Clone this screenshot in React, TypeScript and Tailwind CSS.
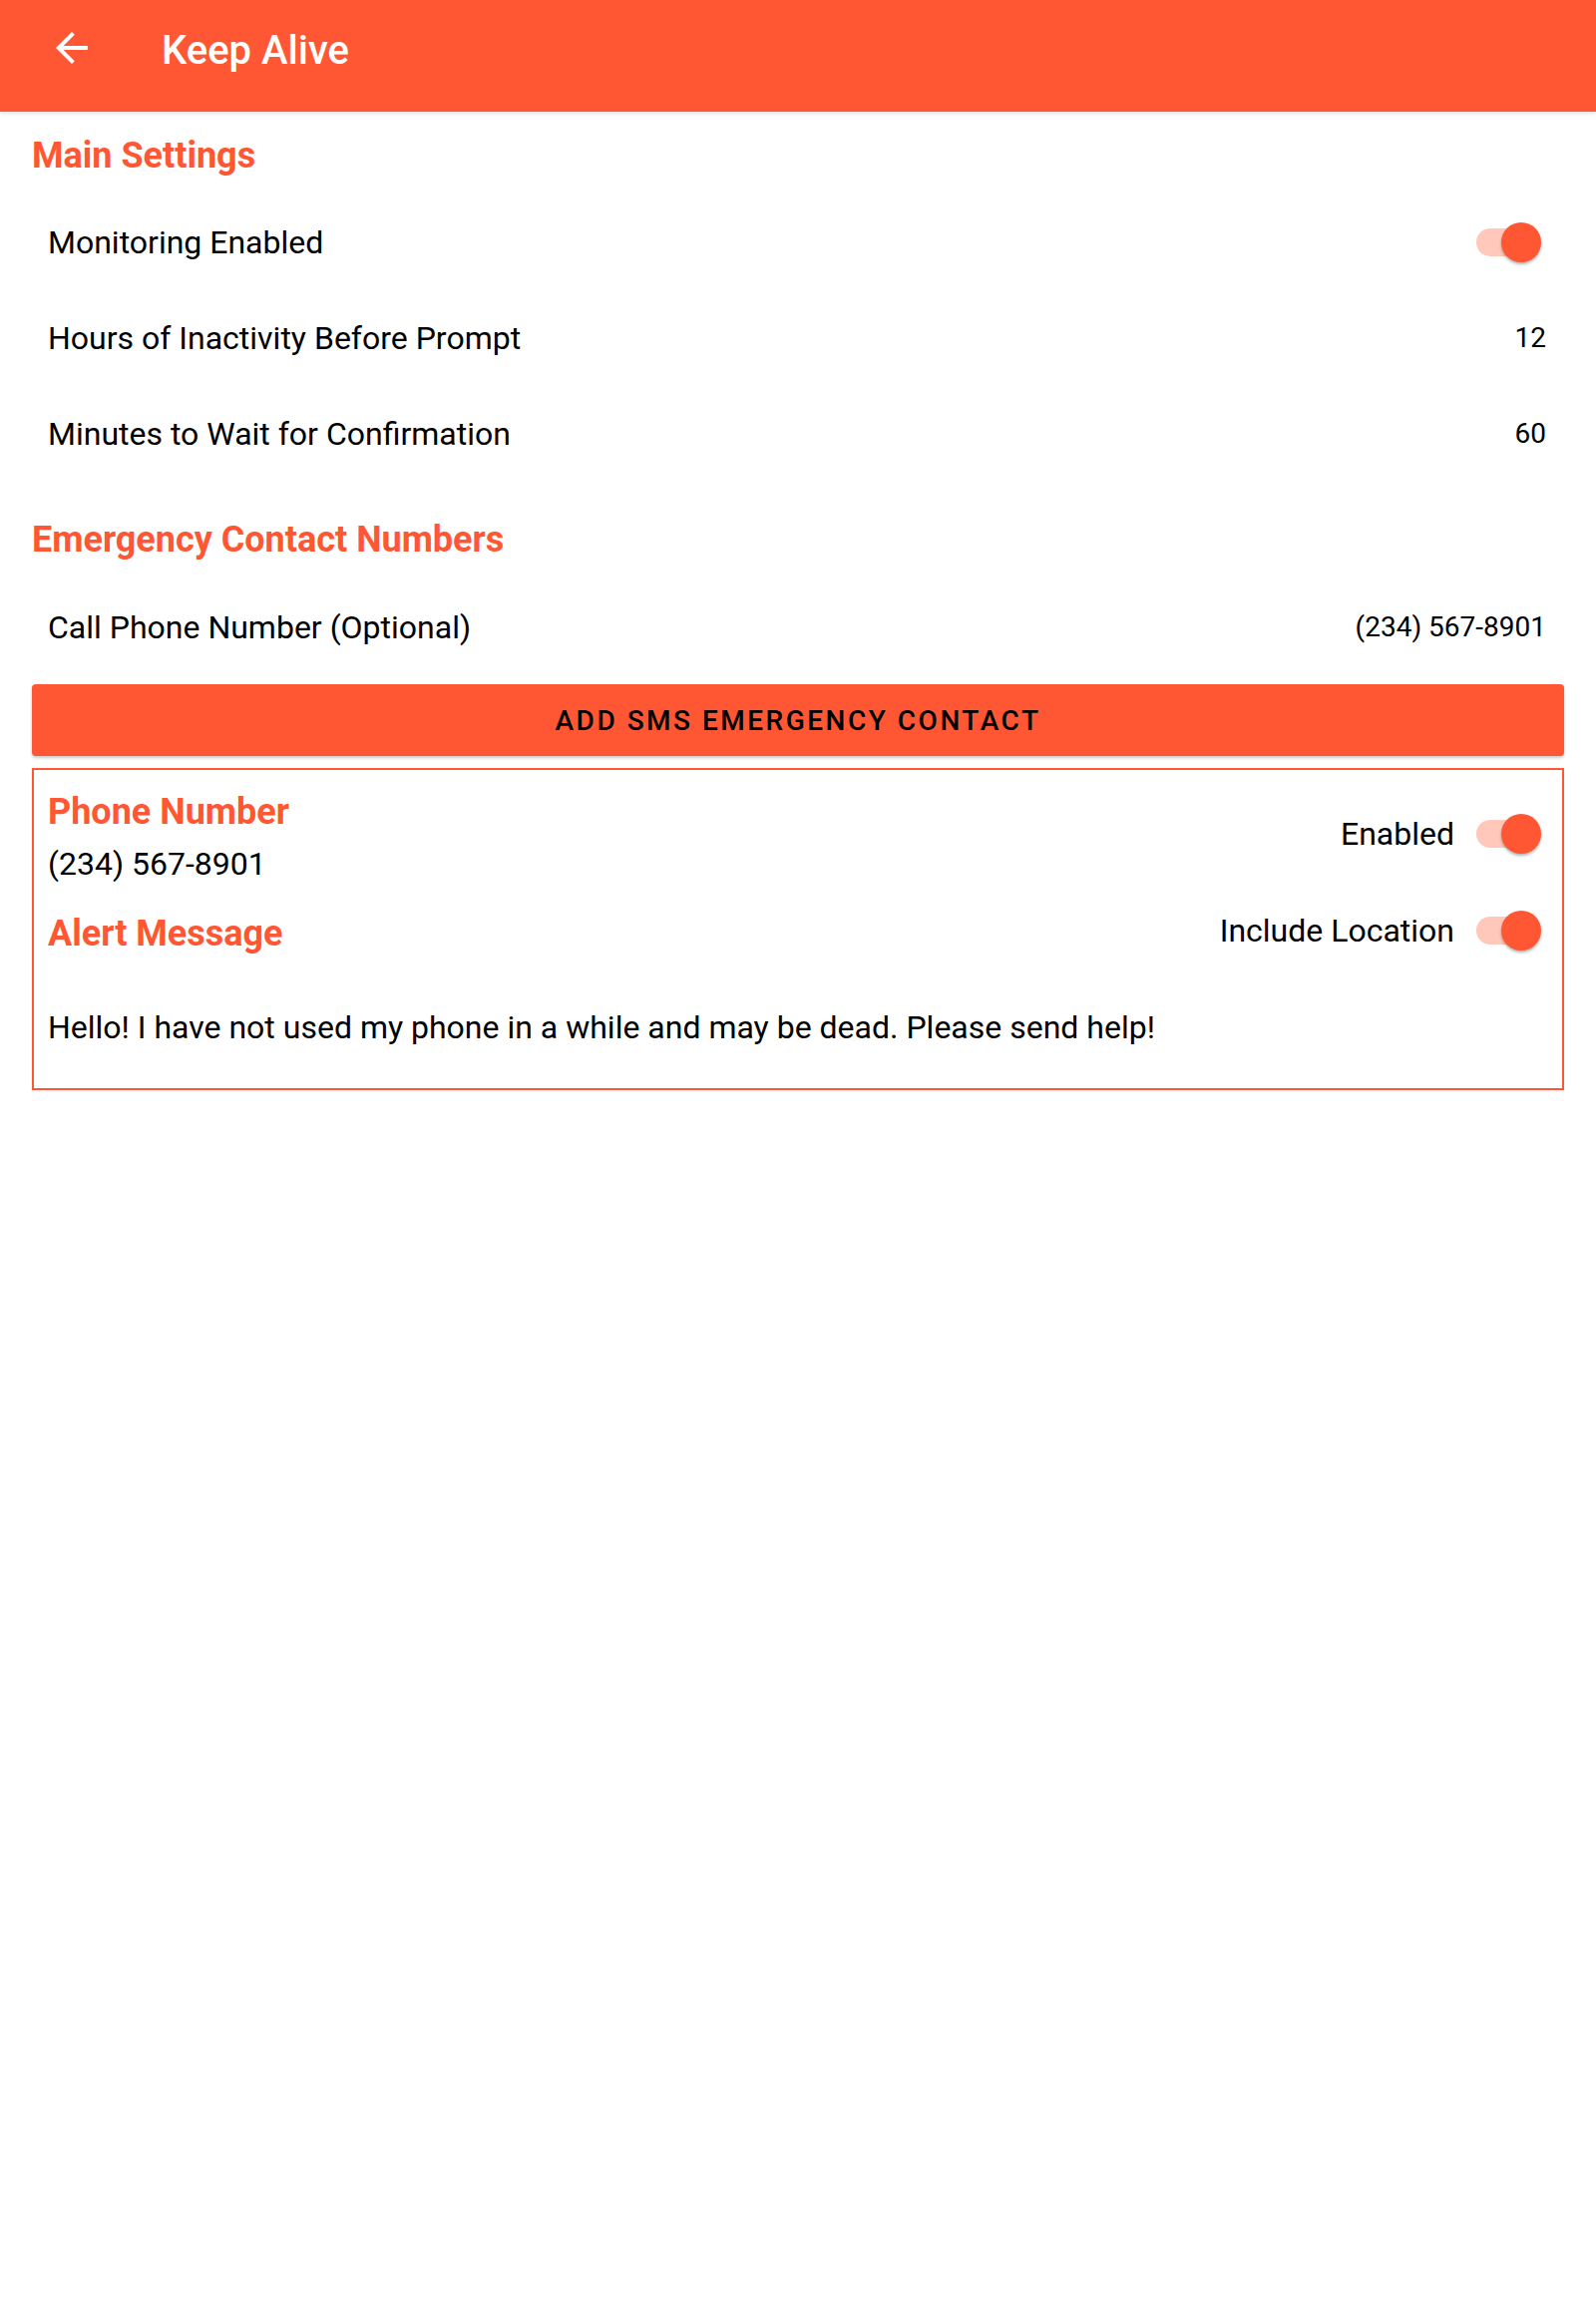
import React from "react";

function Toggle() {
  return (
    <div className="relative h-[40px] w-[65px] shrink-0">
      <div className="absolute left-0 top-[6px] h-[28px] w-[56px] rounded-full bg-[#FFC8BA]" />
      <div className="absolute right-0 top-0 h-[40px] w-[40px] rounded-full bg-[#FF5733] shadow-[0_2px_3px_rgba(0,0,0,0.3)]" />
    </div>
  );
}

function SectionTitle({ children, className }: { children: React.ReactNode; className: string }) {
  return (
    <div className={`pl-[32px] text-[36px] font-bold leading-[44px] text-[#FF5733] ${className}`}>
      {children}
    </div>
  );
}

function ValueRow({ label, value }: { label: string; value: string }) {
  return (
    <div className="flex h-[96px] items-center justify-between pl-[48px] pr-[50px]">
      <span className="text-[32px] text-black">{label}</span>
      <span className="text-[28px] text-black">{value}</span>
    </div>
  );
}

export default function App() {
  return (
    <div className="min-h-[2304px] w-[1600px] bg-white font-['Roboto',sans-serif]">
      {/* Toolbar */}
      <header className="relative h-[112px] bg-[#FF5733] shadow-[0_2px_4px_rgba(0,0,0,0.12)]">
        <div className="flex h-[96px] items-center">
          <div className="ml-[48px] flex h-[48px] w-[48px] items-center justify-center">
            <svg viewBox="0 0 24 24" className="h-[48px] w-[48px]" fill="white">
              <path d="M20 11H7.83l5.59-5.59L12 4l-8 8 8 8 1.41-1.41L7.83 13H20v-2z" />
            </svg>
          </div>
          <span className="ml-[66px] pt-[5px] text-[40px] font-medium text-white">Keep Alive</span>
        </div>
      </header>

      {/* Main settings */}
      <SectionTitle className="pt-[22px] pb-[17px]">Main Settings</SectionTitle>
      <div className="flex h-[96px] items-center justify-between pl-[48px] pr-[55px]">
        <span className="text-[32px] text-black">Monitoring Enabled</span>
        <Toggle />
      </div>
      <ValueRow label="Hours of Inactivity Before Prompt" value="12" />
      <ValueRow label="Minutes to Wait for Confirmation" value="60" />

      {/* Emergency contacts */}
      <SectionTitle className="pt-[36px] pb-[18px]">Emergency Contact Numbers</SectionTitle>
      <ValueRow label="Call Phone Number (Optional)" value="(234) 567-8901" />

      <div className="px-[32px] pt-[9px]">
        <button className="flex h-[72px] w-full items-center justify-center rounded-[4px] bg-[#FF5733] pt-[2px] text-[28px] font-medium uppercase tracking-[2.5px] text-black shadow-[0_2px_3px_rgba(0,0,0,0.2)]">
          Add SMS Emergency Contact
        </button>

        {/* SMS contact card */}
        <div className="mt-[12px] border-2 border-[#FF5733] pl-[14px] pr-[21px]">
          <div className="flex items-start justify-between">
            <div className="pt-[20px]">
              <div className="text-[36px] font-bold leading-[44px] text-[#FF5733]">Phone Number</div>
              <div className="text-[32px] leading-[60px] text-black">(234) 567-8901</div>
            </div>
            <div className="mt-[44px] flex h-[40px] items-center gap-[22px]">
              <span className="text-[32px] text-black">Enabled</span>
              <Toggle />
            </div>
          </div>
          <div className="flex items-start justify-between">
            <div className="pt-[18px] text-[36px] font-bold leading-[44px] text-[#FF5733]">Alert Message</div>
            <div className="mt-[17px] flex h-[40px] items-center gap-[22px]">
              <span className="text-[32px] text-black">Include Location</span>
              <Toggle />
            </div>
          </div>
          <div className="pt-[52px] pb-[41px] text-[32px] leading-[40px] text-black">
            Hello! I have not used my phone in a while and may be dead. Please send help!
          </div>
        </div>
      </div>
    </div>
  );
}
